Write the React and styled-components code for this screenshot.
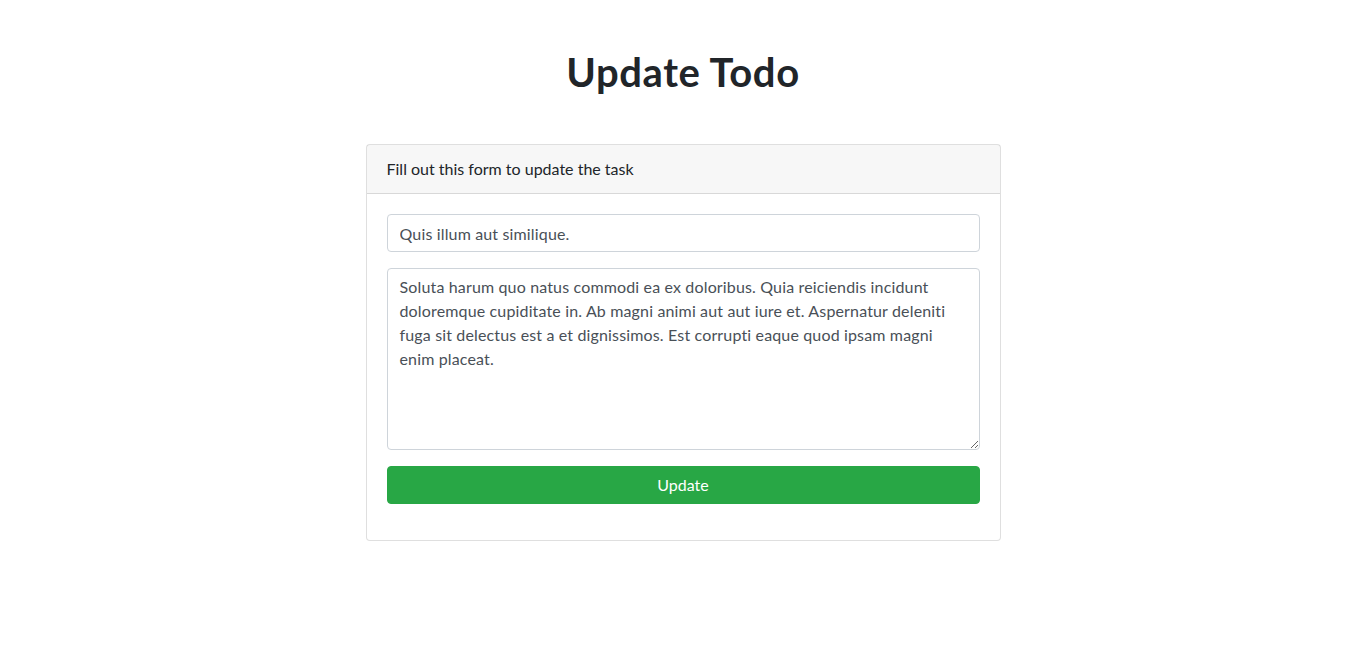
import React, { useState } from 'react';
import styled, { createGlobalStyle } from 'styled-components';

const GlobalStyle = createGlobalStyle`
  * { box-sizing: border-box; }
  body {
    margin: 0;
    background: #fff;
    color: #212529;
    font-family: Lato, "Noto Sans", sans-serif;
    font-size: 16px;
    line-height: 1.5;
  }
`;

const Page = styled.div`
  display: flex;
  flex-direction: column;
  align-items: center;
  padding-top: 48px;
`;

const Title = styled.h1`
  margin: 0 0 48px;
  font-size: 40px;
  line-height: 48px;
  font-weight: 700;
  letter-spacing: 0.6px;
  color: #212529;
`;

const Card = styled.div`
  width: 635px;
  border: 1px solid rgba(0, 0, 0, 0.125);
  border-radius: 4px;
  background: #fff;
`;

const CardHeader = styled.div`
  padding: 12px 20px;
  background: rgba(0, 0, 0, 0.03);
  border-bottom: 1px solid rgba(0, 0, 0, 0.125);
  line-height: 24px;
`;

const CardBody = styled.form`
  padding: 20px;
`;

const FormGroup = styled.div`
  margin-bottom: 16px;
`;

const fieldStyles = `
  display: block;
  width: 100%;
  padding: 6px 12px;
  font-family: Lato, "Noto Sans", sans-serif;
  font-size: 16px;
  line-height: 24px;
  letter-spacing: 0.15px;
  color: #495057;
  background: #fff;
  border: 1px solid #ced4da;
  border-radius: 4px;
  outline: none;
`;

const Input = styled.input`
  ${fieldStyles}
  height: 38px;
`;

const TextArea = styled.textarea`
  ${fieldStyles}
  height: 182px;
  resize: vertical;
`;

const SubmitButton = styled.button`
  display: block;
  width: 100%;
  height: 38px;
  padding: 6px 12px;
  border: 1px solid #28a745;
  border-radius: 4px;
  background: #28a745;
  color: #fff;
  font-family: Lato, "Noto Sans", sans-serif;
  font-size: 16px;
  line-height: 24px;
  cursor: pointer;
`;

export default function App() {
  const [title, setTitle] = useState('Quis illum aut similique.');
  const [body, setBody] = useState(
    'Soluta harum quo natus commodi ea ex doloribus. Quia reiciendis incidunt doloremque cupiditate in. Ab magni animi aut aut iure et. Aspernatur deleniti fuga sit delectus est a et dignissimos. Est corrupti eaque quod ipsam magni enim placeat.'
  );

  return (
    <>
      <GlobalStyle />
      <Page>
        <Title>Update Todo</Title>
        <Card>
          <CardHeader>Fill out this form to update the task</CardHeader>
          <CardBody onSubmit={(e) => e.preventDefault()}>
            <FormGroup>
              <Input value={title} onChange={(e) => setTitle(e.target.value)} />
            </FormGroup>
            <FormGroup>
              <TextArea value={body} onChange={(e) => setBody(e.target.value)} />
            </FormGroup>
            <FormGroup>
              <SubmitButton type="submit">Update</SubmitButton>
            </FormGroup>
          </CardBody>
        </Card>
      </Page>
    </>
  );
}
